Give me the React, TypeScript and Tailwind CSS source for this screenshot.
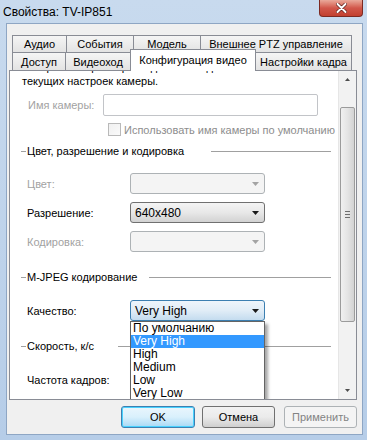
import React from "react";

type ComboState = "disabled" | "normal" | "focused";

function Arrow({ color }: { color: string }) {
  return (
    <svg width="7" height="4" viewBox="0 0 7 4" className="shrink-0">
      <polygon points="0,0 7,0 3.5,4" fill={color} />
    </svg>
  );
}

function Combo({ value, state, children }: { value?: string; state: ComboState; children?: React.ReactNode }) {
  const look =
    state === "disabled"
      ? "border-[#adb2b5] bg-[#f4f4f4]"
      : state === "focused"
      ? "border-[#3c7fb1] bg-gradient-to-b from-[#eef5fb] via-[#e1edf7] to-[#c4dcef]"
      : "border-[#707070] bg-gradient-to-b from-[#f4f4f4] via-[#e8e8e8] to-[#d2d2d2]";
  return (
    <div className={`relative w-[135px] h-[21px] border rounded-[3px] flex items-center justify-between pl-[4px] pr-[5px] ${look}`}>
      <span className="text-[12px]">{value}</span>
      <Arrow color={state === "disabled" ? "#a3a3a3" : "#1a1a1a"} />
      {children}
    </div>
  );
}

function GroupHeader({ title, line }: { title: string; line: string }) {
  return (
    <div className="h-[14px] flex items-center pl-[11px] pr-[7px]">
      <div className="w-[5px] h-px bg-[#a0a0a0]" />
      <span className="ml-px">{title}</span>
      <div className="flex-1" />
      <div className={`${line} h-px bg-[#a0a0a0]`} />
    </div>
  );
}

function FieldRow({ label, disabled, children }: { label: string; disabled?: boolean; children: React.ReactNode }) {
  return (
    <div className="h-[21px] flex items-center">
      <span className={`w-[120px] pl-[17px] ${disabled ? "text-[#a2a2a2]" : ""}`}>{label}</span>
      {children}
    </div>
  );
}

function BackTab({ label, w }: { label: string; w: string }) {
  return (
    <div className={`${w} h-full -ml-px first:ml-0 border border-b-0 border-[#898c95] bg-gradient-to-b from-[#f5f5f5] to-[#e3e3e3] flex items-center justify-center`}>
      {label}
    </div>
  );
}

function CloseButton() {
  return (
    <div className="mr-[4px] w-[44px] h-[17px] rounded-b-[4px] border border-t-0 border-[#7d2a22] bg-gradient-to-b from-[#e9a99a] via-[#d1574a] to-[#c2402f] flex items-center justify-center">
      <svg width="11" height="10" viewBox="0 0 11 10">
        <path d="M1.5 1 L9.5 9 M9.5 1 L1.5 9" stroke="#5a1c16" strokeWidth="3.4" strokeLinecap="round" />
        <path d="M1.5 1 L9.5 9 M9.5 1 L1.5 9" stroke="#ffffff" strokeWidth="2" strokeLinecap="round" />
      </svg>
    </div>
  );
}

function ScrollBar() {
  return (
    <div className="w-[18px] flex flex-col bg-[#f2f2f2] border-l border-[#e6e6e6]">
      <div className="h-[17px] flex items-center justify-center">
        <svg width="5" height="3" viewBox="0 0 5 3">
          <polygon points="0,3 5,3 2.5,0" fill="#4d4d4d" />
        </svg>
      </div>
      <div className="h-[19px]" />
      <div className="mx-[1px] h-[215px] rounded-[2px] border border-[#9b9b9b] bg-gradient-to-r from-[#f0f0f0] via-[#e4e4e4] to-[#d3d3d3] flex flex-col items-center justify-center gap-[2px]">
        <div className="w-[5px] h-px bg-[#6e6e6e]" />
        <div className="w-[5px] h-px bg-[#6e6e6e]" />
        <div className="w-[5px] h-px bg-[#6e6e6e]" />
      </div>
      <div className="flex-1" />
      <div className="h-[17px] flex items-center justify-center">
        <svg width="5" height="3" viewBox="0 0 5 3">
          <polygon points="0,0 5,0 2.5,3" fill="#4d4d4d" />
        </svg>
      </div>
    </div>
  );
}

const qualities = ["По умолчанию", "Very High", "High", "Medium", "Low", "Very Low"];

export default function App() {
  return (
    <div className="w-[367px] h-[440px] flex flex-col bg-gradient-to-b from-[#c8daee] to-[#b6cde8] font-['Liberation_Sans',Arial,sans-serif] text-[11px] leading-[14px] text-black whitespace-nowrap overflow-hidden">
      <div className="h-[23px] shrink-0 flex items-start justify-between">
        <span className="pl-[3px] pt-[5px] text-[12px]">Свойства: TV-IP851</span>
        <CloseButton />
      </div>

      <div className="ml-[6px] mr-[4px] mb-[5px] flex-1 bg-[#f0f0f0] border border-[#8ea6c4] flex flex-col">
        <div className="ml-[5px] mt-[11px] w-[340px] h-[17px] flex">
          <BackTab label="Аудио" w="w-[55px]" />
          <BackTab label="События" w="w-[68px]" />
          <BackTab label="Модель" w="w-[68px]" />
          <BackTab label="Внешнее PTZ управление" w="flex-1" />
        </div>
        <div className="ml-[5px] w-[340px] h-[18px] flex items-end">
          <BackTab label="Доступ" w="w-[54px]" />
          <BackTab label="Видеоход" w="w-[66px]" />
          <div className="relative z-10 -ml-px w-[126px] h-[22px] -mb-px border border-b-0 border-[#898c95] bg-white flex items-start justify-center pt-[3px]">
            Конфигурация видео
          </div>
          <BackTab label="Настройки кадра" w="flex-1" />
        </div>

        <div className="ml-[2px] w-[348px] h-[330px] border border-[#898c95] bg-white flex">
          <div className="flex-1 overflow-hidden flex flex-col">
            <div className="h-[3px] overflow-hidden pl-[12px]">
              <div className="-mt-[11px] h-[14px]">Настройте параметры видеопотока для</div>
            </div>
            <div className="h-[14px] pl-[12px]">текущих настроек камеры.</div>

            <div className="mt-[6px] h-[22px] flex items-center">
              <span className="w-[93px] pl-[18px] text-[#a2a2a2]">Имя камеры:</span>
              <div className="w-[215px] h-[22px] border border-[#c2c4c8] rounded-[2px] bg-white" />
            </div>

            <div className="mt-[7px] h-[13px] flex items-center pl-[98px] text-[#8d8d8d]">
              <div className="w-[13px] h-[13px] border border-[#b9b9b9] bg-gradient-to-br from-[#f0f0f0] to-[#fafafa]" />
              <span className="ml-[3px]">Использовать имя камеры по умолчанию</span>
            </div>

            <div className="mt-[8px]">
              <GroupHeader title="Цвет, разрешение и кодировка" line="w-[120px]" />
            </div>

            <div className="mt-[15px]">
              <FieldRow label="Цвет:" disabled>
                <Combo state="disabled" />
              </FieldRow>
            </div>
            <div className="mt-[8px]">
              <FieldRow label="Разрешение:">
                <Combo state="normal" value="640x480" />
              </FieldRow>
            </div>
            <div className="mt-[8px]">
              <FieldRow label="Кодировка:" disabled>
                <Combo state="disabled" />
              </FieldRow>
            </div>

            <div className="mt-[18px]">
              <GroupHeader title="M-JPEG кодирование" line="w-[182px]" />
            </div>

            <div className="relative z-10 mt-[16px]">
              <FieldRow label="Качество:">
                <Combo state="focused" value="Very High">
                  <div className="absolute left-[-1px] top-[20px] w-[135px] border border-[#646464] bg-white shadow-[3px_3px_3px_rgba(0,0,0,0.35)]">
                    {qualities.map((q) => (
                      <div
                        key={q}
                        className={`h-[13px] leading-[13px] pl-[2px] text-[12px] ${q === "Very High" ? "bg-[#3399ff] text-white" : ""}`}
                      >
                        {q}
                      </div>
                    ))}
                  </div>
                </Combo>
              </FieldRow>
            </div>

            <div className="mt-[18px]">
              <GroupHeader title="Скорость, к/с" line="w-[213px]" />
            </div>

            <div className="mt-[16px]">
              <FieldRow label="Частота кадров:">
                <Combo state="normal" />
              </FieldRow>
            </div>
          </div>
          <ScrollBar />
        </div>

        <div className="mt-[6px] mr-[5px] flex justify-end">
          <div className="w-[74px] h-[22px] rounded-[3px] border border-[#3c7fb1] bg-gradient-to-b from-[#eaf6fd] via-[#d9f0fc] to-[#a7d9f5] flex items-center justify-center shadow-[inset_0_0_0_1px_#48d1fe]">
            OK
          </div>
          <div className="ml-[7px] w-[73px] h-[22px] rounded-[3px] border border-[#707070] bg-gradient-to-b from-[#f2f2f2] via-[#ebebeb] to-[#cfcfcf] flex items-center justify-center">
            Отмена
          </div>
          <div className="ml-[9px] w-[73px] h-[22px] rounded-[3px] border border-[#adb2b5] bg-[#f4f4f4] text-[#838383] flex items-center justify-center">
            Применить
          </div>
        </div>
      </div>
    </div>
  );
}
